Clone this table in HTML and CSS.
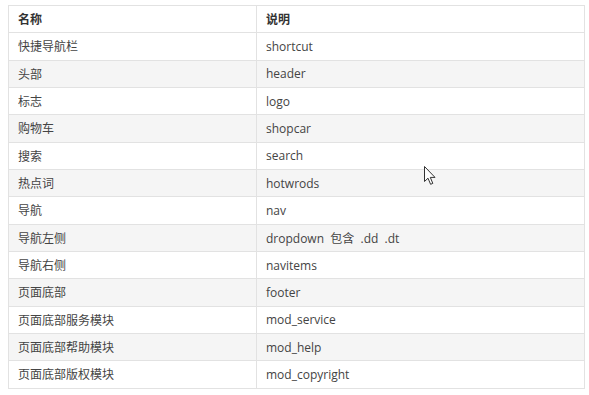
FILE: index.html
```html
<!DOCTYPE html>
<html lang="zh">
<head>
<meta charset="utf-8">
<link rel="stylesheet" href="styles.css">
</head>
<body>
<table class="spec">
  <thead>
    <tr><th class="c1">名称</th><th>说明</th></tr>
  </thead>
  <tbody>
    <tr><td>快捷导航栏</td><td>shortcut</td></tr>
    <tr><td>头部</td><td>header</td></tr>
    <tr><td>标志</td><td>logo</td></tr>
    <tr><td>购物车</td><td>shopcar</td></tr>
    <tr><td>搜索</td><td>search</td></tr>
    <tr><td>热点词</td><td>hotwrods</td></tr>
    <tr><td>导航</td><td>nav</td></tr>
    <tr><td>导航左侧</td><td>dropdown&nbsp; 包含&nbsp; .dd&nbsp; .dt</td></tr>
    <tr><td>导航右侧</td><td>navitems</td></tr>
    <tr><td>页面底部</td><td>footer</td></tr>
    <tr><td>页面底部服务模块</td><td>mod_service</td></tr>
    <tr><td>页面底部帮助模块</td><td>mod_help</td></tr>
    <tr><td>页面底部版权模块</td><td>mod_copyright</td></tr>
  </tbody>
</table>
<svg class="cursor" width="13" height="20" viewBox="0 0 13 20">
  <path d="M0.5 0.5 L0.5 15.5 L4 12.2 L6.6 18.3 L8.8 17.4 L6.3 11.4 L11 11.4 Z" fill="#fff" stroke="#333" stroke-width="1" stroke-linejoin="round"/>
</svg>
</body>
</html>
```
FILE: styles.css
```css
html, body {
  margin: 0;
  padding: 0;
  background: #fff;
}
body {
  padding: 5px 0 0 8px;
  font-family: "Open Sans", "Noto Sans CJK SC", sans-serif;
  font-size: 12px;
  color: #444;
  position: relative;
}
.spec {
  border-collapse: collapse;
  width: 577px;
}
.spec th,
.spec td {
  border: 1px solid #e2e2e2;
  padding: 0 9px;
  height: 26.33px;
  text-align: left;
  vertical-align: middle;
  white-space: nowrap;
}
.spec th {
  font-weight: bold;
  color: #333;
}
.spec .c1 {
  width: 229px;
}
.spec tbody tr:nth-child(even) td {
  background: #f5f5f5;
}
.cursor {
  position: absolute;
  left: 424px;
  top: 166px;
}
```
